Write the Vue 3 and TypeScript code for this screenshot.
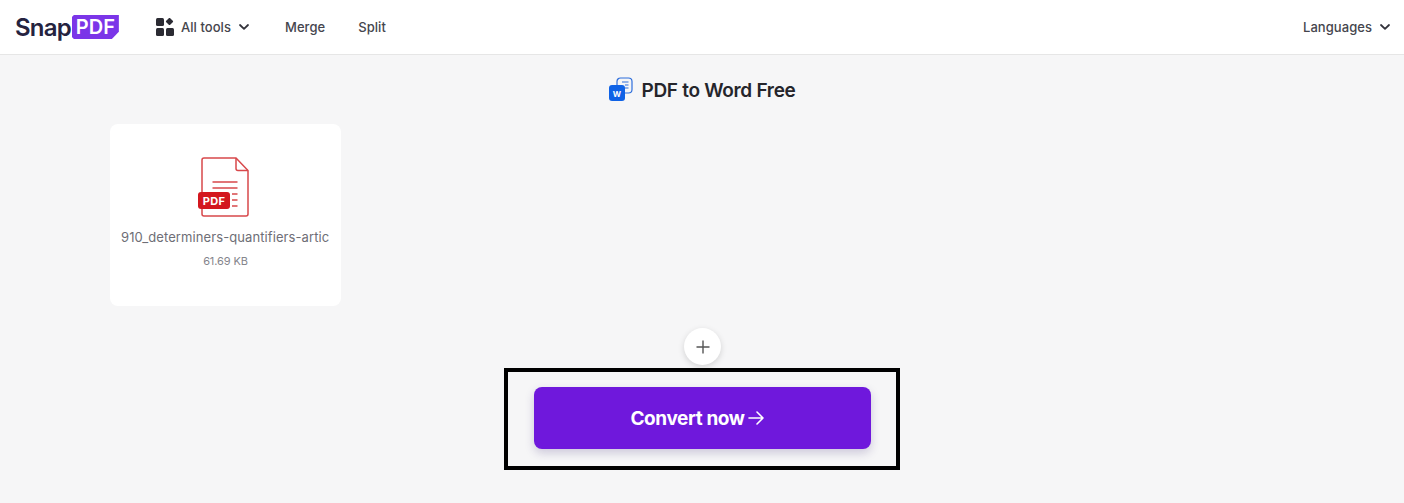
<script setup lang="ts">
const navLinks = ['Merge', 'Split']
const file = { name: '910_determiners-quantifiers-artic', size: '61.69 KB' }
</script>

<template>
  <div class="page">
    <header class="topbar">
      <div class="logo">
        <span class="logo-snap">Snap</span>
        <span class="logo-pdf">PDF</span>
      </div>
      <div class="all-tools">
        <svg class="grid-icon" viewBox="0 0 18 18" width="18" height="18">
          <rect x="0" y="0" width="8" height="8" rx="1.500" fill="#2b2b33" />
          <rect x="10.700" y="0.700" width="5.600" height="5.600" rx="1" fill="#2b2b33" transform="rotate(45 13.500 3.500)" />
          <rect x="0" y="10" width="8" height="8" rx="1.500" fill="#2b2b33" />
          <rect x="10" y="10" width="8" height="8" rx="1.500" fill="#2b2b33" />
        </svg>
        <span class="nav-text">All tools</span>
        <svg class="chevron" viewBox="0 0 10 6" width="10" height="6">
          <path d="M1 1l4 3.800L9 1" fill="none" stroke="#33333b" stroke-width="1.800" stroke-linecap="round" stroke-linejoin="round" />
        </svg>
      </div>
      <nav class="links">
        <a v-for="link in navLinks" :key="link" class="nav-text">{{ link }}</a>
      </nav>
      <div class="languages">
        <span class="nav-text">Languages</span>
        <svg class="chevron" viewBox="0 0 10 6" width="10" height="6">
          <path d="M1 1l4 3.800L9 1" fill="none" stroke="#33333b" stroke-width="1.800" stroke-linecap="round" stroke-linejoin="round" />
        </svg>
      </div>
    </header>

    <main class="content">
      <div class="title-row">
        <svg viewBox="0 0 26 26" width="26" height="26">
          <rect x="9" y="1" width="15" height="15" rx="3.500" fill="#f5f5f6" stroke="#2f6fdc" stroke-width="1.200" />
          <path d="M14 5h6.500M17 8h3.500M17 11h3.500" stroke="#2f6fdc" stroke-width="1.100" fill="none" />
          <rect x="1" y="8" width="16" height="16" rx="3" fill="#0f62e6" />
          <text x="9" y="19.500" font-size="8" font-weight="700" text-anchor="middle" fill="#fff" font-family="Inter, sans-serif">W</text>
        </svg>
        <h1 class="title">PDF to Word Free</h1>
      </div>

      <div class="files">
        <div class="file-card">
          <svg class="file-icon" viewBox="0 0 51 60" width="51" height="60">
            <path d="M6 1h32l12 12.500V57a2 2 0 0 1-2 2H6a2 2 0 0 1-2-2V3a2 2 0 0 1 2-2z" fill="#fff" stroke="#d8484b" stroke-width="1.500" />
            <path d="M38 1v10.500a2 2 0 0 0 2 2h10" fill="none" stroke="#d8484b" stroke-width="1.500" />
            <path d="M14.500 25h25M14.500 31h25M34 37h5.500M34 43h5.500M34 49h5.500" stroke="#d8484b" stroke-width="1.400" fill="none" />
            <rect x="0" y="35" width="32" height="17" rx="3" fill="#d3171e" />
            <text x="16" y="47.500" font-size="11" font-weight="700" text-anchor="middle" fill="#fff" font-family="Inter, sans-serif" letter-spacing="0.300">PDF</text>
          </svg>
          <div class="file-name">{{ file.name }}</div>
          <div class="file-size">{{ file.size }}</div>
        </div>
      </div>

      <button class="add-btn" aria-label="Add file">
        <svg viewBox="0 0 14 14" width="14" height="14">
          <path d="M7 0.500v13M0.500 7h13" stroke="#555" stroke-width="1.400" fill="none" />
        </svg>
      </button>

      <div class="highlight">
        <button class="convert-btn">
          <span>Convert now</span>
          <svg viewBox="0 0 16 14" width="16" height="14">
            <path d="M1 7h14M9 1l6 6-6 6" fill="none" stroke="#fff" stroke-width="1.600" stroke-linecap="round" stroke-linejoin="round" />
          </svg>
        </button>
      </div>
    </main>
  </div>
</template>

<style scoped>
.page {
  width: 1404px;
  height: 503px;
  background: #f6f6f7;
  font-family: Inter, "Noto Sans", sans-serif;
  overflow: hidden;
}

.topbar {
  height: 54px;
  background: #fff;
  border-bottom: 1px solid #e6e6e6;
  display: flex;
  align-items: center;
  padding: 0 14px 0 15px;
}

.logo { display: flex; align-items: center; width: 141px; gap: 1px; }
.logo-snap { font-size: 24px; font-weight: 600; letter-spacing: -0.8px; color: #25233f; }
.logo-pdf {
  width: 47px;
  height: 24px;
  background: #7b35e8;
  color: #fff;
  font-size: 20px;
  font-weight: 600;
  line-height: 24px;
  text-align: center;
  clip-path: polygon(2px 0, 100% 0, 100% 70%, calc(100% - 7px) 100%, 2px 100%, 0 calc(100% - 2px), 0 2px);
}

.all-tools { display: flex; align-items: center; width: 129px; }
.grid-icon { margin-right: 7px; }
.all-tools .chevron { margin-left: 8px; }

.nav-text { font-size: 13px; font-weight: 500; letter-spacing: 0.05px; color: #45454d; }

.links { display: flex; gap: 33px; }

.languages { margin-left: auto; display: flex; align-items: center; gap: 8px; }

.content { display: flex; flex-direction: column; }

.title-row {
  display: flex;
  align-items: center;
  justify-content: center;
  gap: 7px;
  height: 26px;
  margin-top: 22px;
}
.title { margin: 0; font-size: 19px; font-weight: 600; letter-spacing: -0.3px; color: #25252b; }

.files { padding-left: 110px; margin-top: 21px; }

.file-card {
  width: 231px;
  height: 182px;
  box-sizing: border-box;
  background: #fff;
  border-radius: 8px;
  padding: 33px 11px 0;
  display: flex;
  flex-direction: column;
  align-items: center;
}

.file-icon { margin-right: 4px; }

.file-name {
  width: 100%;
  margin-top: 12px;
  font-size: 13px;
  letter-spacing: 0.09px;
  line-height: 16px;
  color: #6e6e76;
  white-space: nowrap;
}

.file-size { margin-top: 9px; font-size: 11px; line-height: 14px; letter-spacing: -0.1px; color: #85858c; }

.add-btn {
  align-self: flex-start;
  width: 37px;
  height: 37px;
  margin: 22px 0 0 684px;
  padding: 0;
  border: none;
  border-radius: 50%;
  background: #fff;
  box-shadow: 0 2px 6px rgba(0, 0, 0, 0.15);
  display: flex;
  align-items: center;
  justify-content: center;
}

.highlight {
  align-self: flex-start;
  margin: 3px 0 0 504px;
  width: 396px;
  height: 102px;
  box-sizing: border-box;
  border: 4px solid #000;
  padding: 15px 25px 17px 26px;
}

.convert-btn {
  width: 100%;
  height: 100%;
  border: none;
  border-radius: 8px;
  background: #6f18dc;
  color: #fff;
  font-family: inherit;
  font-size: 19px;
  font-weight: 700;
  letter-spacing: -0.4px;
  display: flex;
  align-items: center;
  justify-content: center;
  gap: 3px;
  padding: 0 11px 0 0;
  box-shadow: 0 4px 10px rgba(60, 40, 120, 0.22);
}
</style>
